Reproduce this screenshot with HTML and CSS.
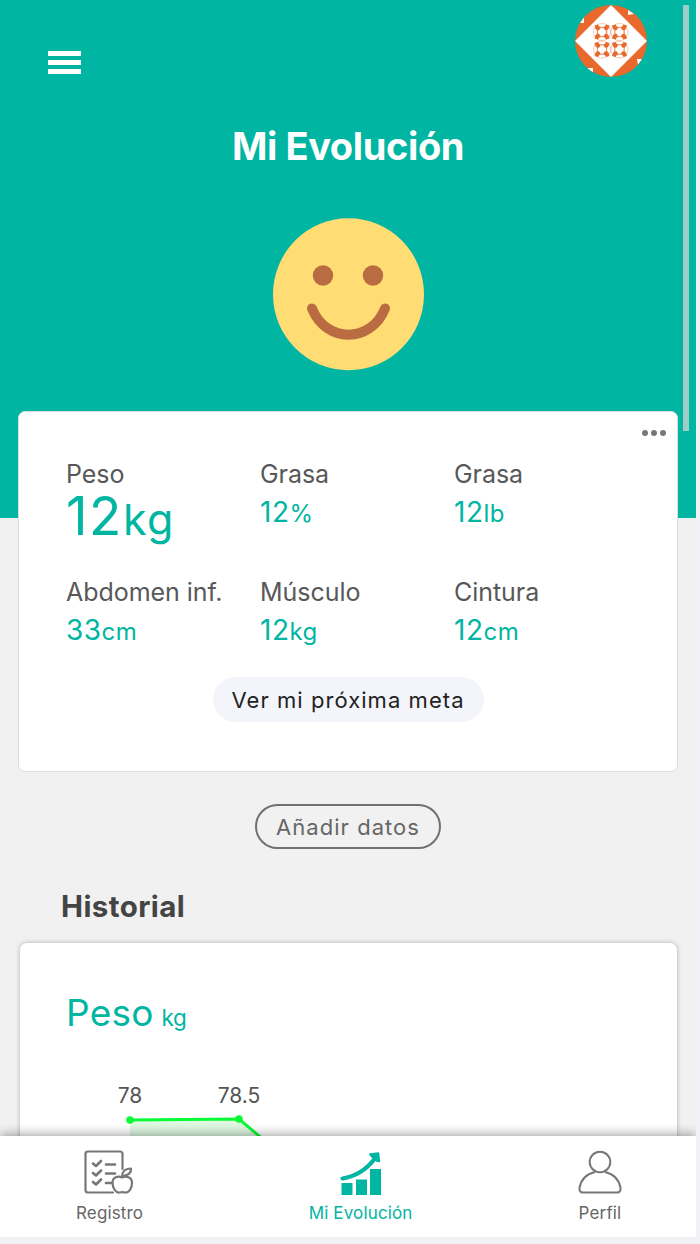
FILE: index.html
```html
<!DOCTYPE html>
<html lang="es">
<head>
<meta charset="utf-8">
<title>Mi Evolución</title>
<link rel="stylesheet" href="styles.css">
</head>
<body>
<div class="app">
  <main class="content">
    <header class="hero">
      <div class="topbar">
        <div class="menu"><span></span><span></span><span></span></div>
        <svg class="avatar" viewBox="0 0 72 72">
          <defs>
            <clipPath id="round"><circle cx="36" cy="36" r="36"/></clipPath>
            <g id="tile">
              <path d="M3 3Q8.500 5 14 3Q12 8.500 14 14Q8.500 12 3 14Q5 8.500 3 3Z" fill="none" stroke="#e8692b" stroke-width=".9"/>
              <path d="M1 2L4.500 1L7 5L5 7L2 5.500ZM16 2L12.500 1L10 5L12 7L15 5.500ZM1 15L4.500 16L7 12L5 10L2 11.500ZM16 15L12.500 16L10 12L12 10L15 11.500Z" fill="#e8692b"/>
              <path d="M2 3Q0 5 0 8.500Q0 12 2 14M15 3Q17 5 17 8.500Q17 12 15 14M3 2Q5 0 8.500 0Q12 0 14 2M3 15Q5 17 8.500 17Q12 17 14 15" fill="none" stroke="#e8692b" stroke-width=".35"/>
            </g>
          </defs>
          <g clip-path="url(#round)">
            <rect width="72" height="72" fill="#e8692b"/>
            <path d="M36 0L72 36L36 72L0 36Z" fill="#fff"/>
            <path d="M53 5L59 9L53 10ZM5 18L9 12L9 18ZM62 54L67 54L63 60ZM12 63L18 63L18 68Z" fill="#fff"/>
            <use href="#tile" x="18.500" y="18.500"/><use href="#tile" x="36" y="18.500"/>
            <use href="#tile" x="18.500" y="36"/><use href="#tile" x="36" y="36"/>
          </g>
        </svg>
      </div>
      <h1 class="title">Mi Evolución</h1>
      <svg class="smiley" viewBox="0 0 151 153">
        <ellipse cx="75.500" cy="76.300" rx="75.500" ry="76" fill="#ffdc74"/>
        <circle cx="50" cy="57.500" r="10.200" fill="#b96b42"/>
        <circle cx="100" cy="57.500" r="10.200" fill="#b96b42"/>
        <path d="M39 90.500C53 125.500 98 125.500 112 90.500" fill="none" stroke="#b96b42" stroke-width="10" stroke-linecap="round"/>
      </svg>
    </header>
    <section class="card summary">
      <div class="more"><i></i><i></i><i></i></div>
      <div class="stats">
        <div class="stat big"><span class="label">Peso</span><span class="value">12<small>kg</small></span></div>
        <div class="stat"><span class="label">Grasa</span><span class="value">12<small>%</small></span></div>
        <div class="stat"><span class="label">Grasa</span><span class="value">12<small>lb</small></span></div>
        <div class="stat"><span class="label">Abdomen inf.</span><span class="value">33<small>cm</small></span></div>
        <div class="stat"><span class="label">Músculo</span><span class="value">12<small>kg</small></span></div>
        <div class="stat"><span class="label">Cintura</span><span class="value">12<small>cm</small></span></div>
      </div>
      <button class="pill goal">Ver mi próxima meta</button>
    </section>
    <button class="pill add">Añadir datos</button>
    <h2 class="section-title">Historial</h2>
    <section class="card history">
      <h3 class="chart-title"><span>Peso</span><small>kg</small></h3>
      <svg class="chart" width="560" height="120" viewBox="0 0 560 120">
        <path d="M62 46L171 45L235 99V120H62Z" fill="#dff8e2"/>
        <path d="M62 46L171 45L235 99" fill="none" stroke="#08fb35" stroke-width="3"/>
        <circle cx="62" cy="46" r="3.800" fill="#08fb35"/>
        <circle cx="171" cy="45" r="3.800" fill="#08fb35"/>
        <text x="62" y="28.500" text-anchor="middle">78</text>
        <text x="171" y="28.500" text-anchor="middle">78.5</text>
      </svg>
    </section>
  </main>
  <nav class="tabs">
    <a class="tab tab-log">
      <svg width="50" height="46" viewBox="0 0 50 46" fill="none" stroke="#777" stroke-width="2.200" stroke-linecap="round" stroke-linejoin="round">
        <path d="M29 42.500H4Q1.500 42.500 1.500 40V4Q1.500 1.500 4 1.500H36Q38.500 1.500 38.500 4V19"/>
        <path stroke-width="2.600" d="M9 13.500L12 16L17 11M9 23L12 25.500L17 20.500M9 32L12 34.500L17 29.500M22 14.500H31M22 23.500H31M22 33H28"/>
        <path d="M38 27.500C34 25.500 28.500 27 28.500 33C28.500 38 32 43 35.500 42.500C37 42 39.500 42 41 42.500C45 43 48 38 48 33C48 27 42 25.500 38 27.500ZM38 27C38 22 41 18.500 47 18.500C47.500 23 43.500 26 38.500 26"/>
      </svg>
      <span>Registro</span>
    </a>
    <a class="tab tab-progress">
      <svg width="44" height="46" viewBox="0 0 44 46" fill="#00b5a1">
        <path d="M2.500 33h11v12h-11zM17 29.500h11V45H17zM31 19h11v26H31z"/>
        <path d="M3.500 28.500C16 26.500 27 20 35.500 9" fill="none" stroke="#00b5a1" stroke-width="4.200" stroke-linecap="round"/>
        <path d="M31 4L39.500 3L40.500 11.500L37.500 11L31.500 5.500Z" stroke="#00b5a1" stroke-width="1.500" stroke-linejoin="round"/>
      </svg>
      <span>Mi Evolución</span>
    </a>
    <a class="tab tab-profile">
      <svg width="44" height="46" viewBox="0 0 44 46" fill="none" stroke="#777" stroke-width="2">
        <circle cx="22" cy="12" r="10.300"/>
        <path d="M17 22C8 24 3 30 1.500 38Q1 42.500 5 42.500H39Q43 42.500 42.500 38C41 30 36 24 27 22"/>
      </svg>
      <span>Perfil</span>
    </a>
  </nav>
  <div class="scroll-thumb"></div>
</div>
</body>
</html>
```
FILE: styles.css
```css
* { box-sizing: border-box; }
body {
  margin: 0;
  height: 1244px;
  overflow: hidden;
  background: #f0f2f5;
  font-family: Inter, "Liberation Sans", sans-serif;
}
h1, h2, h3 { margin: 0; }
.app {
  position: relative;
  display: flex;
  flex-direction: column;
  width: 696px;
  height: 1237px;
  background: #f1f1f1;
}
.content {
  display: flex;
  flex-direction: column;
  height: 1136px;
  overflow: hidden;
}
.hero {
  flex: none;
  display: flex;
  flex-direction: column;
  align-items: center;
  height: 518px;
  background: #00b5a1;
}
.topbar {
  display: flex;
  justify-content: space-between;
  width: 100%;
  height: 122px;
  padding: 5px 49px 0 48px;
}
.menu {
  display: flex;
  flex-direction: column;
  gap: 4px;
  width: 33px;
  margin-top: 46px;
}
.menu span { height: 5px; background: #fff; }
.avatar { width: 72px; height: 72px; }
.title {
  height: 48px;
  line-height: 48px;
  color: #fff;
  font-size: 38px;
  font-weight: 700;
  letter-spacing: -.38px;
}
.smiley { width: 151px; height: 153px; margin-top: 48px; }
.card {
  flex: none;
  width: 660px;
  margin-left: 18px;
  background: #fff;
  border-radius: 7px;
}
.summary {
  display: flex;
  flex-direction: column;
  align-items: center;
  height: 361px;
  margin-top: -107px;
  border: 1px solid #ddd;
}
.more {
  display: flex;
  align-self: flex-end;
  gap: 3px;
  margin: 18px 11px 1px 0;
}
.more i { width: 6px; height: 6px; border-radius: 50%; background: #777; }
.stats {
  display: grid;
  grid-template-columns: repeat(3, 194px);
  grid-auto-rows: 118px;
  align-self: flex-start;
  margin: 20px 0 0 47px;
}
.stat { display: flex; flex-direction: column; }
.label {
  height: 34px;
  line-height: 34px;
  color: #585858;
  font-size: 25px;
  letter-spacing: -.05px;
  white-space: nowrap;
}
.value {
  height: 42px;
  line-height: 42px;
  color: #00b5a1;
  font-size: 28px;
  letter-spacing: .5px;
}
.value small { font-size: 24px; }
.big .value { height: 54px; line-height: 50px; font-size: 53px; letter-spacing: 1.5px; }
.big small { font-size: 43px; }
.pill {
  flex: none;
  height: 45px;
  padding: 0;
  border: 0;
  border-radius: 23px;
  font: 22px Inter, sans-serif;
}
.goal {
  width: 271px;
  margin-top: -16px;
  background: #f3f5fa;
  color: #222;
  letter-spacing: 1.05px;
}
.add {
  align-self: center;
  width: 186px;
  margin-top: 32px;
  border: 2px solid #707070;
  background: none;
  color: #666;
  letter-spacing: 1.05px;
}
.section-title {
  flex: none;
  height: 40px;
  margin: 37px 0 0 61px;
  line-height: 40px;
  color: #444;
  font-size: 29.500px;
  letter-spacing: .4px;
}
.history {
  width: 657px;
  height: 300px;
  margin: 17px 0 0 20px;
  padding: 44px 0 0 46px;
  box-shadow: 0 0 5px rgba(0, 0, 0, .28);
}
.chart-title {
  display: flex;
  align-items: baseline;
  gap: 8px;
  height: 52px;
  line-height: 52px;
  color: #00b5a1;
  font-size: 37px;
  font-weight: 400;
  letter-spacing: .2px;
}
.chart-title small { font-size: 22.500px; letter-spacing: -.3px; }
.chart { display: block; margin-top: 35px; margin-left: 2px; }
.chart text { fill: #555; font: 21px Inter, sans-serif; }
.tabs {
  position: relative;
  display: flex;
  justify-content: space-between;
  height: 101px;
  padding: 14px 74px 0 76px;
  background: #fff;
  box-shadow: 0 -2px 10px rgba(0, 0, 0, .35);
  clip-path: inset(-12px 0 0 0);
}
.tab {
  display: flex;
  flex-direction: column;
  align-items: center;
  color: #666;
  font-size: 17px;
  letter-spacing: .15px;
}
.tab svg { display: block; }
.tab span { height: 32px; line-height: 34px; }
.tab-log svg { margin-left: -2px; }
.tab-progress { color: #00b5a1; }
.scroll-thumb {
  position: absolute;
  top: 5px;
  right: 7px;
  width: 6px;
  height: 426px;
  background: #9dcfc8;
}
```
